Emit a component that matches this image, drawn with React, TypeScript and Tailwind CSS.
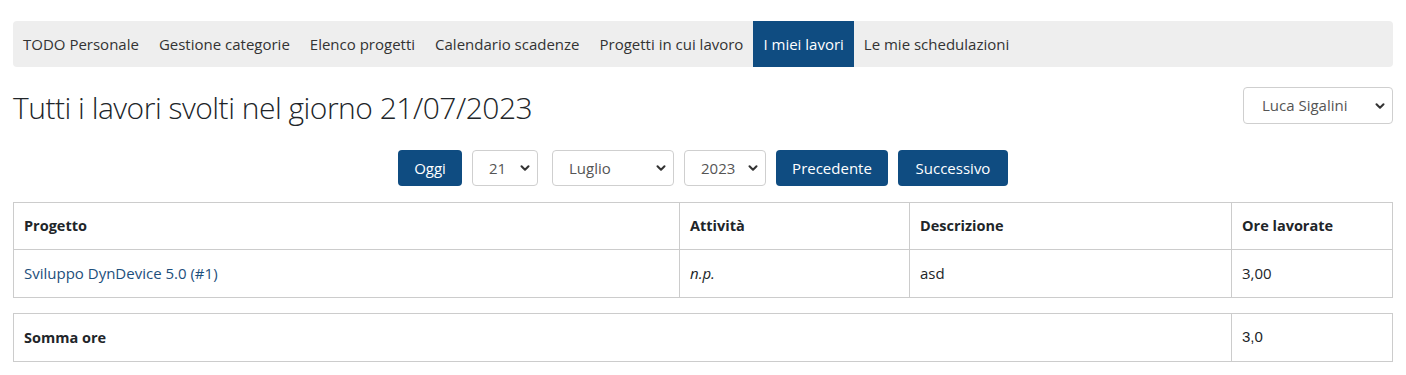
import { ChevronDown } from "lucide-react";

const menu = [
  "TODO Personale",
  "Gestione categorie",
  "Elenco progetti",
  "Calendario scadenze",
  "Progetti in cui lavoro",
  "I miei lavori",
  "Le mie schedulazioni",
];

function Select({ value, className }: { value: string; className: string }) {
  return (
    <div
      className={`flex h-9 items-center justify-between rounded border border-[#cfcfcf] bg-white pl-4 pr-[5px] text-[15px] text-[#555] ${className}`}
    >
      <span>{value}</span>
      <ChevronDown size={14} strokeWidth={3.5} className="text-[#333]" />
    </div>
  );
}

function Button({ label, className }: { label: string; className: string }) {
  return (
    <button
      className={`h-9 rounded bg-[#0f4c81] text-[15px] font-medium text-white ${className}`}
    >
      {label}
    </button>
  );
}

export default function App() {
  return (
    <div
      className="min-h-screen bg-white px-[13px] pt-[21px] text-[#212529]"
      style={{ fontFamily: "'Open Sans', sans-serif" }}
    >
      <nav className="flex h-[46px] rounded bg-[#eeeeee]">
        {menu.map((item) => (
          <a
            key={item}
            className={`flex items-center px-[10px] text-[15px] ${
              item === "I miei lavori"
                ? "bg-[#0f4c81] text-white"
                : "text-[#333]"
            }`}
          >
            {item}
          </a>
        ))}
      </nav>

      <div className="mt-5 flex items-start justify-between">
        <h1 className="pt-[3px] text-[30px] font-light leading-[36px] tracking-[-0.5px] text-[#212529]">
          Tutti i lavori svolti nel giorno 21/07/2023
        </h1>
        <Select value="Luca Sigalini" className="h-[37px] w-[150px] pl-[18px]" />
      </div>

      <div className="mt-[24px] flex justify-center gap-2.5">
        <Button label="Oggi" className="w-16" />
        <Select value="21" className="w-[66px]" />
        <Select value="Luglio" className="ml-1 w-[122px]" />
        <Select value="2023" className="w-[82px]" />
        <Button label="Precedente" className="w-28" />
        <Button label="Successivo" className="w-[110px]" />
      </div>

      <table className="mt-4 w-full border-collapse text-[15px]">
        <thead>
          <tr className="h-[47px] text-[14.5px]">
            <th className="w-[666px] border border-[#cccccc] px-2.5 text-left font-bold">
              Progetto
            </th>
            <th className="w-[230px] border border-[#cccccc] px-2.5 text-left font-bold">
              Attività
            </th>
            <th className="w-[322px] border border-[#cccccc] px-2.5 text-left font-bold">
              Descrizione
            </th>
            <th className="border border-[#cccccc] px-2.5 text-left font-bold">
              Ore lavorate
            </th>
          </tr>
        </thead>
        <tbody>
          <tr className="h-[48px]">
            <td className="border border-[#cccccc] px-2.5 text-[#1d4f7c]">
              Sviluppo DynDevice 5.0 (#1)
            </td>
            <td className="border border-[#cccccc] px-2.5 italic">n.p.</td>
            <td className="border border-[#cccccc] px-2.5">asd</td>
            <td className="border border-[#cccccc] px-2.5">3,00</td>
          </tr>
        </tbody>
      </table>

      <table className="mt-[15px] w-full border-collapse text-[14.5px]">
        <tbody>
          <tr className="h-[48px]">
            <td className="w-[1218px] border border-[#cccccc] px-2.5 font-bold">
              Somma ore
            </td>
            <td
              className="border border-[#cccccc] px-2.5 text-[15px]"
              style={{ fontFamily: "'Liberation Sans', Arial, sans-serif" }}
            >
              3,0
            </td>
          </tr>
        </tbody>
      </table>
    </div>
  );
}
